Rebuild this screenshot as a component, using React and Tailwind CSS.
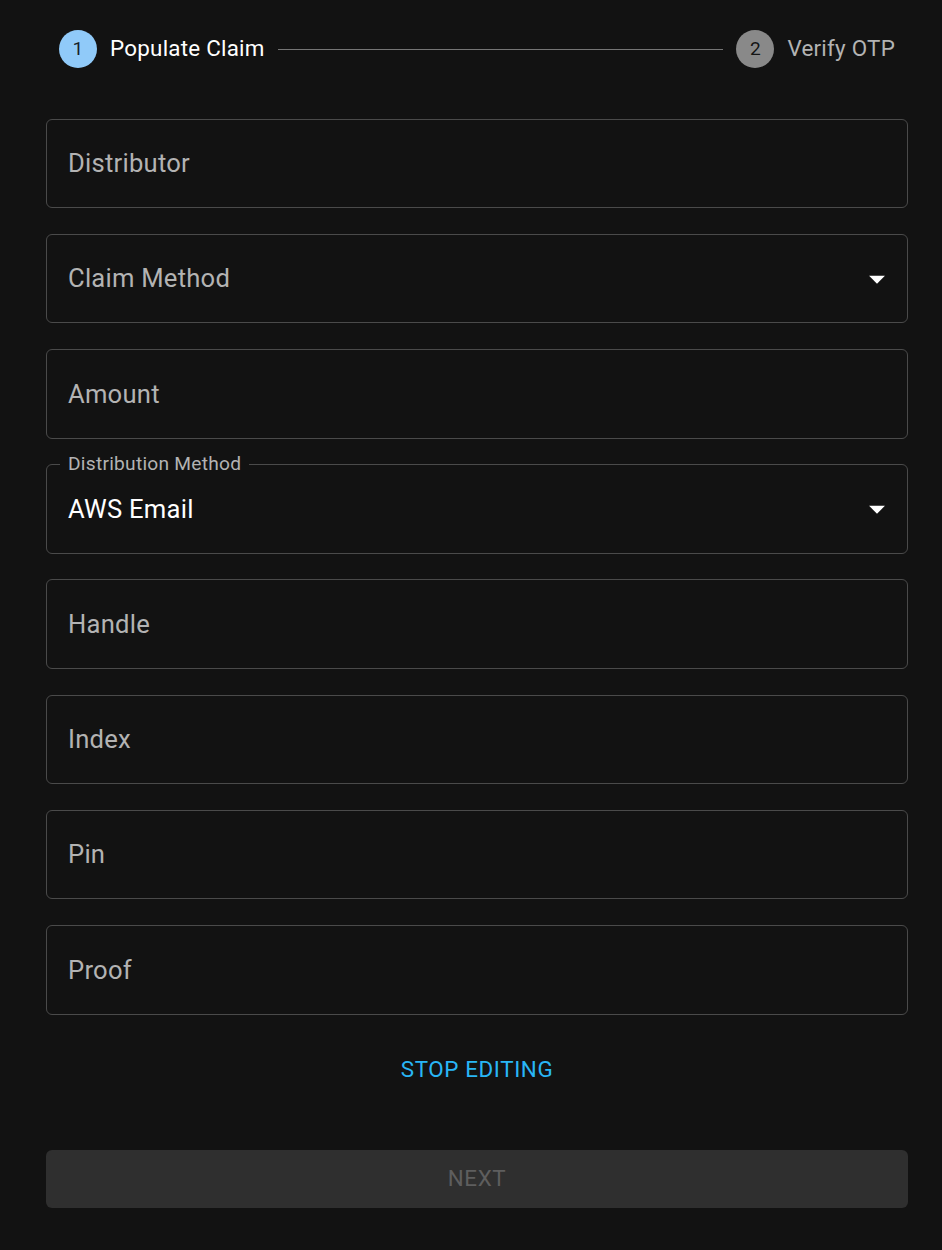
import React from "react";

const font = { fontFamily: "Roboto, 'Liberation Sans', sans-serif" };

const Caret = () => (
  <svg className="absolute right-[11px] top-1/2 -translate-y-1/2 w-[38px] h-[38px]" viewBox="0 0 24 24" fill="#ffffff">
    <path d="M7 10l5 5 5-5z" />
  </svg>
);

const Field = ({ label, select = false, value = null }) => (
  <div className="relative h-[89.6px] rounded-[6px] border border-[#4a4a4a] flex items-center pl-[21px] tracking-[0.24px]">
    {value ? (
      <>
        <span className="absolute left-[13px] -top-[13px] bg-[#121212] px-2 text-[19.2px] leading-[24px] text-[#b3b3b3]">{label}</span>
        <span className="text-[25.6px] text-white">{value}</span>
      </>
    ) : (
      <span className="text-[25.6px] text-[#b3b3b3]">{label}</span>
    )}
    {select && <Caret />}
  </div>
);

const App = () => {
  const fields = [
    { label: "Distributor" },
    { label: "Claim Method", select: true },
    { label: "Amount" },
    { label: "Distribution Method", select: true, value: "AWS Email" },
    { label: "Handle" },
    { label: "Index" },
    { label: "Pin" },
    { label: "Proof" },
  ];

  return (
    <div className="min-h-[1250px] w-full bg-[#121212] pl-[46px] pr-[34px] pt-[30px]" style={font}>
      {/* Stepper */}
      <div className="flex items-center tracking-[0.24px]">
        <div className="flex items-center px-[13px]">
          <div className="w-[38px] h-[38px] rounded-full bg-[#90caf9] flex items-center justify-center text-[19.2px] text-black/85">1</div>
          <span className="ml-[13px] text-[22.4px] text-white">Populate Claim</span>
        </div>
        <div className="flex-1 h-px bg-[#757575]" />
        <div className="flex items-center px-[13px]">
          <div className="w-[38px] h-[38px] rounded-full bg-[#898989] flex items-center justify-center text-[19.2px] text-black/85">2</div>
          <span className="ml-[13px] text-[22.4px] text-[#b3b3b3]">Verify OTP</span>
        </div>
      </div>

      {/* Fields */}
      <div className="mt-[50.6px] flex flex-col gap-[25.6px]">
        {fields.map((f) => (
          <Field key={f.label} {...f} />
        ))}
      </div>

      <div className="flex justify-center mt-[38.6px]">
        <button className="text-[22.4px] tracking-[0.6px] text-[#29b6f6] uppercase">Stop Editing</button>
      </div>

      <button className="mt-[63px] w-full h-[58px] rounded-[6px] bg-[#2f2f2f] text-[22.4px] tracking-[0.6px] text-[#5e5e5e] uppercase">
        Next
      </button>
    </div>
  );
};

export default App;
